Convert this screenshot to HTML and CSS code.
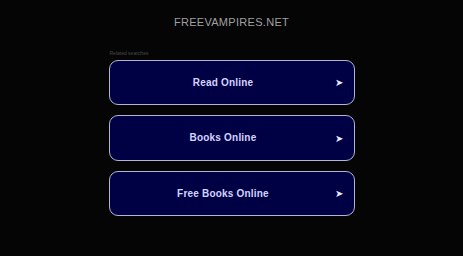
FILE: index.html
```html
<!DOCTYPE html>
<html>
<head>
<meta charset="utf-8">
<link rel="stylesheet" href="styles.css">
</head>
<body>
<div class="page">
  <div class="title">FREEVAMPIRES.NET</div>
  <div class="content">
    <div class="label">Related searches</div>
    <a class="card" href="#"><span class="card-text">Read Online</span><span class="arrow">&#10148;</span></a>
    <a class="card" href="#"><span class="card-text">Books Online</span><span class="arrow">&#10148;</span></a>
    <a class="card" href="#"><span class="card-text">Free Books Online</span><span class="arrow">&#10148;</span></a>
  </div>
</div>
</body>
</html>
```

FILE: styles.css
```css
html, body {
  margin: 0;
  padding: 0;
  background: #050505;
}
.page {
  width: 463px;
  height: 256px;
  font-family: "Liberation Sans", Arial, sans-serif;
}
.title {
  padding-top: 16px;
  height: 13px;
  line-height: 13px;
  font-size: 11px;
  color: #a0a0a0;
  text-align: center;
  letter-spacing: 0.3px;
}
.content {
  width: 246px;
  margin: 21px auto 0;
  display: flex;
  flex-direction: column;
}
.label {
  font-size: 5px;
  line-height: 6px;
  height: 6px;
  color: #4a4a4a;
  margin-left: 1px;
  margin-bottom: 3.5px;
}
.card {
  box-sizing: border-box;
  height: 45.5px;
  margin-bottom: 10px;
  border: 1px solid #b4b4d2;
  border-radius: 9px;
  background: #000044;
  display: flex;
  align-items: center;
  text-decoration: none;
  position: relative;
}
.card-text {
  flex: 1;
  text-align: center;
  padding-right: 17px;
  font-size: 10px;
  font-weight: bold;
  color: #d4d4ff;
  letter-spacing: 0.2px;
}
.arrow {
  position: absolute;
  right: 10px;
  top: 50%;
  transform: translateY(-45%);
  font-size: 10px;
  color: #e8e8ff;
  font-family: "DejaVu Sans", sans-serif;
}
```
